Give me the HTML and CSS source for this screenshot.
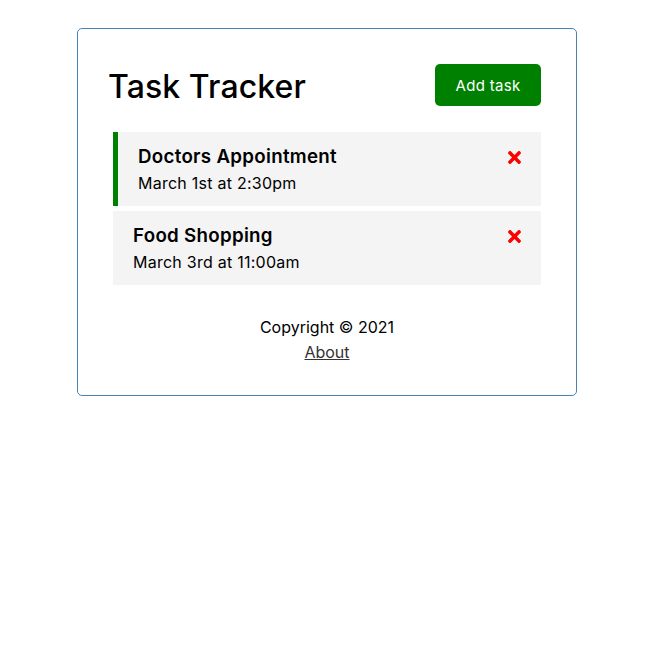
FILE: index.html
```html
<!DOCTYPE html>
<html lang="en">
<head>
<meta charset="utf-8">
<title>Task Tracker</title>
<link rel="stylesheet" href="styles.css">
</head>
<body>
<div class="container">
  <header class="header">
    <h1 class="title">Task Tracker</h1>
    <button class="btn">Add task</button>
  </header>
  <div class="tasks">
    <div class="task reminder">
      <h3 class="task-title">Doctors Appointment
        <svg class="times" viewBox="0 0 352 512" aria-hidden="true"><path d="M242.72 256l100.07-100.07c12.28-12.28 12.28-32.19 0-44.48l-22.24-22.24c-12.28-12.28-32.19-12.28-44.48 0L176 189.28 75.93 89.21c-12.28-12.28-32.19-12.28-44.48 0L9.21 111.45c-12.28 12.28-12.28 32.19 0 44.48L109.28 256 9.21 356.07c-12.28 12.28-12.28 32.19 0 44.48l22.24 22.24c12.28 12.28 32.2 12.28 44.48 0L176 322.72l100.07 100.07c12.28 12.28 32.2 12.28 44.48 0l22.24-22.24c12.28-12.28 12.28-32.19 0-44.48L242.72 256z"/></svg>
      </h3>
      <p class="task-day">March 1st at 2:30pm</p>
    </div>
    <div class="task">
      <h3 class="task-title">Food Shopping
        <svg class="times" viewBox="0 0 352 512" aria-hidden="true"><path d="M242.72 256l100.07-100.07c12.28-12.28 12.28-32.19 0-44.48l-22.24-22.24c-12.28-12.28-32.19-12.28-44.48 0L176 189.28 75.93 89.21c-12.28-12.28-32.19-12.28-44.48 0L9.21 111.45c-12.28 12.28-12.28 32.19 0 44.48L109.28 256 9.21 356.07c-12.28 12.28-12.28 32.19 0 44.48l22.24 22.24c12.28 12.28 32.2 12.28 44.48 0L176 322.72l100.07 100.07c12.28 12.28 32.2 12.28 44.48 0l22.24-22.24c12.28-12.28 12.28-32.19 0-44.48L242.72 256z"/></svg>
      </h3>
      <p class="task-day">March 3rd at 11:00am</p>
    </div>
  </div>
  <footer class="footer">
    <p class="copy">Copyright &copy; 2021</p>
    <a class="about" href="#about">About</a>
  </footer>
</div>
</body>
</html>
```
FILE: styles.css
```css
* {
  box-sizing: border-box;
}

body {
  margin: 0;
  padding-right: 2px;
  font-family: Inter, "Open Sans", sans-serif;
  color: #000;
  background: #fff;
}

.container {
  width: 500px;
  margin: 28px auto 0;
  border: 1px solid steelblue;
  border-radius: 5px;
  padding: 30px;
}

.header {
  display: flex;
  justify-content: space-between;
  align-items: center;
  height: 52px;
  margin-bottom: 21px;
}

.title {
  margin: 0;
  padding-top: 3px;
  font-size: 32px;
  font-weight: 500;
  line-height: 45px;
  letter-spacing: 0.1px;
}

.btn {
  margin: 5px;
  height: 42px;
  width: 106px;
  padding: 0;
  border: none;
  border-radius: 5px;
  background: #008000;
  color: #fff;
  font-family: inherit;
  font-size: 15px;
  letter-spacing: 0.3px;
  cursor: pointer;
}

.tasks {
  display: flex;
  flex-direction: column;
  gap: 5px;
  padding: 0 5px;
}

.task {
  background: #f4f4f4;
  padding: 10px 20px;
  height: 74px;
}

.task.reminder {
  border-left: 5px solid #008000;
}

.task-title {
  margin: 0;
  padding-top: 2px;
  display: flex;
  justify-content: space-between;
  align-items: center;
  font-size: 18.72px;
  font-weight: 600;
  line-height: 26px;
  letter-spacing: 0.3px;
}

.times {
  width: 13px;
  height: 19px;
  fill: red;
}

.task-day {
  margin: 0;
  font-size: 16px;
  line-height: 26px;
  letter-spacing: 0.25px;
}

.footer {
  margin-top: 30px;
  text-align: center;
  font-size: 16px;
  line-height: 24px;
}

.copy {
  margin: 0;
}

.about {
  display: inline-block;
  margin-top: 1px;
  line-height: 25px;
  color: #333;
}
```
